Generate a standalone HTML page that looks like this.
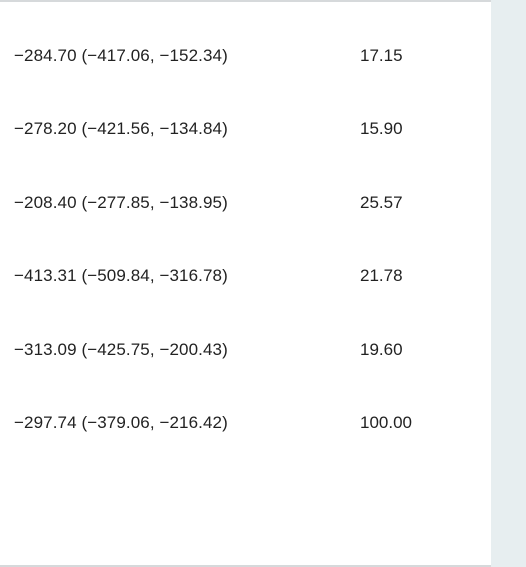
<!DOCTYPE html>
<html><head><style>
body{margin:0;width:526px;height:567px;background:#fff;position:relative;overflow:hidden;font-family:"Liberation Sans",sans-serif;color:#222;font-size:17px}
.panel{position:absolute;left:491px;top:0;width:35px;height:567px;background:#e7eef0}
.top{position:absolute;left:0;top:0;width:491px;height:2px;background:#d6d9db}
.bot{position:absolute;left:0;top:565px;width:491px;height:2px;background:#d6d9db}
.r{position:absolute;left:14px;line-height:20px;white-space:nowrap;letter-spacing:0.1px}
.v{position:absolute;left:360px;line-height:20px}
</style></head><body>
<div class="panel"></div><div class="top"></div><div class="bot"></div>
<div class="r" style="top:46px">−284.70 (−417.06, −152.34)</div><div class="v" style="top:46px">17.15</div>
<div class="r" style="top:119px">−278.20 (−421.56, −134.84)</div><div class="v" style="top:119px">15.90</div>
<div class="r" style="top:193px">−208.40 (−277.85, −138.95)</div><div class="v" style="top:193px">25.57</div>
<div class="r" style="top:266px">−413.31 (−509.84, −316.78)</div><div class="v" style="top:266px">21.78</div>
<div class="r" style="top:340px">−313.09 (−425.75, −200.43)</div><div class="v" style="top:340px">19.60</div>
<div class="r" style="top:413px">−297.74 (−379.06, −216.42)</div><div class="v" style="top:413px">100.00</div>
</body></html>
